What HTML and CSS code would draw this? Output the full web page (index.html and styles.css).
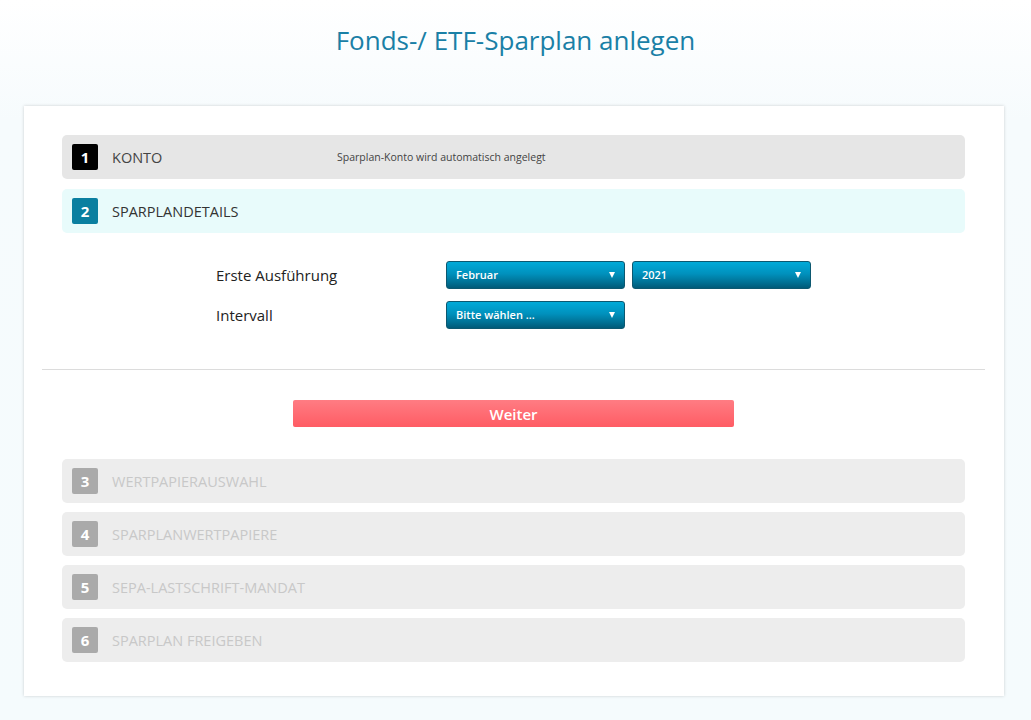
FILE: index.html
```html
<!DOCTYPE html>
<html lang="de">
<head>
  <meta charset="UTF-8">
  <title>Fonds-/ ETF-Sparplan anlegen</title>
  <link rel="stylesheet" href="styles.css">
</head>
<body>

<h1 class="page-title">Fonds-/ ETF-Sparplan anlegen</h1>

<div class="card">
  <div class="step step-done">
    <span class="step-num">1</span>
    <span class="step-title">KONTO</span>
    <span class="step-note">Sparplan-Konto wird automatisch angelegt</span>
  </div>

  <div class="step step-active">
    <span class="step-num">2</span>
    <span class="step-title">SPARPLANDETAILS</span>
  </div>

  <div class="details">
    <div class="form-row">
      <label class="form-label">Erste Ausführung</label>
      <div class="select">Februar</div>
      <div class="select">2021</div>
    </div>
    <div class="form-row">
      <label class="form-label">Intervall</label>
      <div class="select">Bitte wählen ...</div>
    </div>
  </div>

  <hr class="divider">

  <div class="actions">
    <button class="btn-next" type="button">Weiter</button>
  </div>

  <div class="step step-off">
    <span class="step-num">3</span>
    <span class="step-title">WERTPAPIERAUSWAHL</span>
  </div>
  <div class="step step-off">
    <span class="step-num">4</span>
    <span class="step-title">SPARPLANWERTPAPIERE</span>
  </div>
  <div class="step step-off">
    <span class="step-num">5</span>
    <span class="step-title">SEPA-LASTSCHRIFT-MANDAT</span>
  </div>
  <div class="step step-off">
    <span class="step-num">6</span>
    <span class="step-title">SPARPLAN FREIGEBEN</span>
  </div>
</div>

</body>
</html>
```

FILE: styles.css
```css
html {
  height: 100%;
}

body {
  margin: 0;
  padding: 0;
  min-height: 100%;
  font-family: "Open Sans", Arial, sans-serif;
  color: #333;
  background: linear-gradient(#ffffff 0px, #f6fbfd 120px, #f5fbfd 100%);
}

.page-title {
  margin: 0;
  padding: 22px 0 0;
  height: 80px;
  box-sizing: border-box;
  text-align: center;
  font-size: 26px;
  font-weight: normal;
  color: #1a80a6;
}

.card {
  width: 980px;
  margin: 26px 0 0 24px;
  box-sizing: border-box;
  padding: 29px 39px 34px 38px;
  background: #fff;
  box-shadow: 0 0 3px rgba(0, 0, 0, 0.18);
}

/* Steps */
.step {
  display: flex;
  align-items: center;
  height: 44px;
  padding: 0 10px;
  border-radius: 5px;
  margin-bottom: 10px;
}

.step:last-child {
  margin-bottom: 0;
}

.step-num {
  width: 26px;
  height: 26px;
  border-radius: 2px;
  display: flex;
  align-items: center;
  justify-content: center;
  color: #fff;
  font-size: 15px;
  font-weight: bold;
  margin-right: 14px;
}

.step-title {
  font-size: 14.5px;
  width: 225px;
}

.step-note {
  font-size: 10.5px;
  color: #444;
}

.step-done {
  background: #e6e6e6;
}

.step-done .step-num {
  background: #000;
}

.step-done .step-title {
  color: #444;
}

.step-active {
  background: #e8fbfb;
}

.step-active .step-num {
  background: #0a7fa0;
}

.step-active .step-title {
  color: #333;
}

.step-off {
  background: #ededed;
  margin-bottom: 9px;
}

.step-off .step-num {
  background: #aaa;
}

.step-off .step-title {
  color: #c8c8c8;
}

/* Details form */
.details {
  padding: 18px 0 40px 154px;
}

.form-row {
  display: flex;
  align-items: center;
  margin-bottom: 12px;
}

.form-row:last-child {
  margin-bottom: 0;
}

.form-label {
  width: 230px;
  font-size: 15px;
  color: #222;
}

.select {
  position: relative;
  width: 179px;
  height: 28px;
  box-sizing: border-box;
  margin-right: 7px;
  padding: 0 0 0 9px;
  line-height: 26px;
  font-size: 11px;
  font-weight: 600;
  color: #fff;
  border: 1px solid #0c5870;
  border-radius: 3px;
  background: linear-gradient(#00aad8, #0091bd 45%, #006f92 80%, #005a78);
}

.select::after {
  content: "";
  position: absolute;
  right: 9px;
  top: 10px;
  border-left: 3.5px solid transparent;
  border-right: 3.5px solid transparent;
  border-top: 6px solid #fff;
}

.divider {
  margin: 0 -20px;
  border: 0;
  border-top: 1px solid #dcdcdc;
}

.actions {
  display: flex;
  justify-content: center;
  padding: 30px 0 32px;
}

.btn-next {
  width: 441px;
  height: 27px;
  border: none;
  border-radius: 2px;
  background: linear-gradient(#ff7c83, #ff5c64);
  color: #fff;
  font-family: inherit;
  font-size: 15px;
  font-weight: 600;
}
```
